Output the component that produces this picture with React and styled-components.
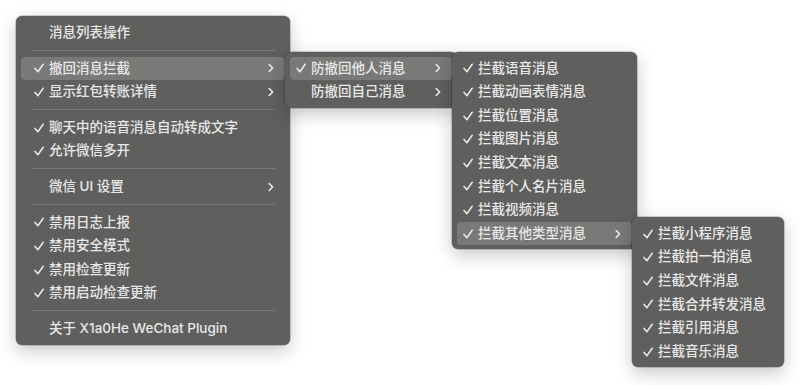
import React from "react";
import styled, { createGlobalStyle } from "styled-components";

const GlobalStyle = createGlobalStyle`
  body {
    margin: 0;
    background: #ffffff;
    font-family: "Inter", "Noto Sans CJK SC", sans-serif;
  }
`;

const SEP = { sep: true };

const sub4 = [
  "拦截小程序消息",
  "拦截拍一拍消息",
  "拦截文件消息",
  "拦截合并转发消息",
  "拦截引用消息",
  "拦截音乐消息",
].map((label) => ({ label, check: true }));

const sub3 = [
  ...[
    "拦截语音消息",
    "拦截动画表情消息",
    "拦截位置消息",
    "拦截图片消息",
    "拦截文本消息",
    "拦截个人名片消息",
    "拦截视频消息",
  ].map((label) => ({ label, check: true })),
  { label: "拦截其他类型消息", check: true, arrow: true, sub: { items: sub4, width: 152 } },
];

const sub2 = [
  { label: "防撤回他人消息", check: true, arrow: true, sub: { items: sub3, width: 185 } },
  { label: "防撤回自己消息", arrow: true },
];

const mainItems = [
  { label: "消息列表操作" },
  SEP,
  { label: "撤回消息拦截", check: true, arrow: true, sub: { items: sub2, width: 172 } },
  { label: "显示红包转账详情", check: true, arrow: true },
  SEP,
  { label: "聊天中的语音消息自动转成文字", check: true },
  { label: "允许微信多开", check: true },
  SEP,
  { label: "微信 UI 设置", arrow: true },
  SEP,
  { label: "禁用日志上报", check: true },
  { label: "禁用安全模式", check: true },
  { label: "禁用检查更新", check: true },
  { label: "禁用启动检查更新", check: true },
  SEP,
  { label: "关于 X1a0He WeChat Plugin" },
];

const Check = () => (
  <svg width="10" height="10" viewBox="0 0 10 10">
    <path d="M1 5.4 L3.9 8.8 L9.2 1.2" fill="none" stroke="#eaeaea" strokeWidth="1.5" strokeLinecap="round" strokeLinejoin="round" />
  </svg>
);

const Chevron = () => (
  <svg width="6" height="10" viewBox="0 0 6 10">
    <path d="M1.2 1.5 L4.6 5 L1.2 8.5" fill="none" stroke="#eaeaea" strokeWidth="1.6" strokeLinecap="round" strokeLinejoin="round" />
  </svg>
);

const Menu = ({ items, width, wide }) => (
  <Panel $width={width}>
    {items.map((item, i) =>
      item.sep ? (
        <Separator key={i} />
      ) : (
        <Row key={i} $active={!!item.sub} $wide={wide}>
          <CheckSlot>{item.check && <Check />}</CheckSlot>
          <Label>{item.label}</Label>
          {item.arrow && (
            <Arrow>
              <Chevron />
            </Arrow>
          )}
          {item.sub && (
            <SubWrap>
              <Menu items={item.sub.items} width={item.sub.width} />
            </SubWrap>
          )}
        </Row>
      )
    )}
  </Panel>
);

const App = () => (
  <Page>
    <GlobalStyle />
    <Menu items={mainItems} width={274} wide />
  </Page>
);

const Page = styled.div`
  padding: 16px;
  height: 385px;
  box-sizing: border-box;
`;

const Panel = styled.div`
  width: ${(p) => p.$width}px;
  box-sizing: border-box;
  padding: 5px 5px 4px;
  background: #5f5f5e;
  border-radius: 6px;
  box-shadow: 0 0 0 0.5px rgba(0, 0, 0, 0.35), 0 6px 18px rgba(0, 0, 0, 0.22);
`;

const Row = styled.div`
  position: relative;
  display: flex;
  align-items: center;
  height: 23.6px;
  padding: 0 11px 0 ${(p) => (p.$wide ? 13 : 6)}px;
  border-radius: 4px;
  background: ${(p) => (p.$active ? "#797978" : "transparent")};
  color: #e8e8e8;
  font-size: 13.5px;
  font-weight: 500;
`;

const CheckSlot = styled.span`
  width: 10px;
  height: 10px;
  margin-right: 5px;
  display: flex;
  flex: none;
`;

const Label = styled.span`
  flex: 1;
  white-space: nowrap;
  line-height: 1;
`;

const Arrow = styled.span`
  display: flex;
  width: 6px;
  height: 10px;
`;

const Separator = styled.div`
  height: 1px;
  margin: 5.5px 10px;
  background: #777776;
`;

const SubWrap = styled.div`
  position: absolute;
  left: 100%;
  top: -5px;
`;

export default App;
